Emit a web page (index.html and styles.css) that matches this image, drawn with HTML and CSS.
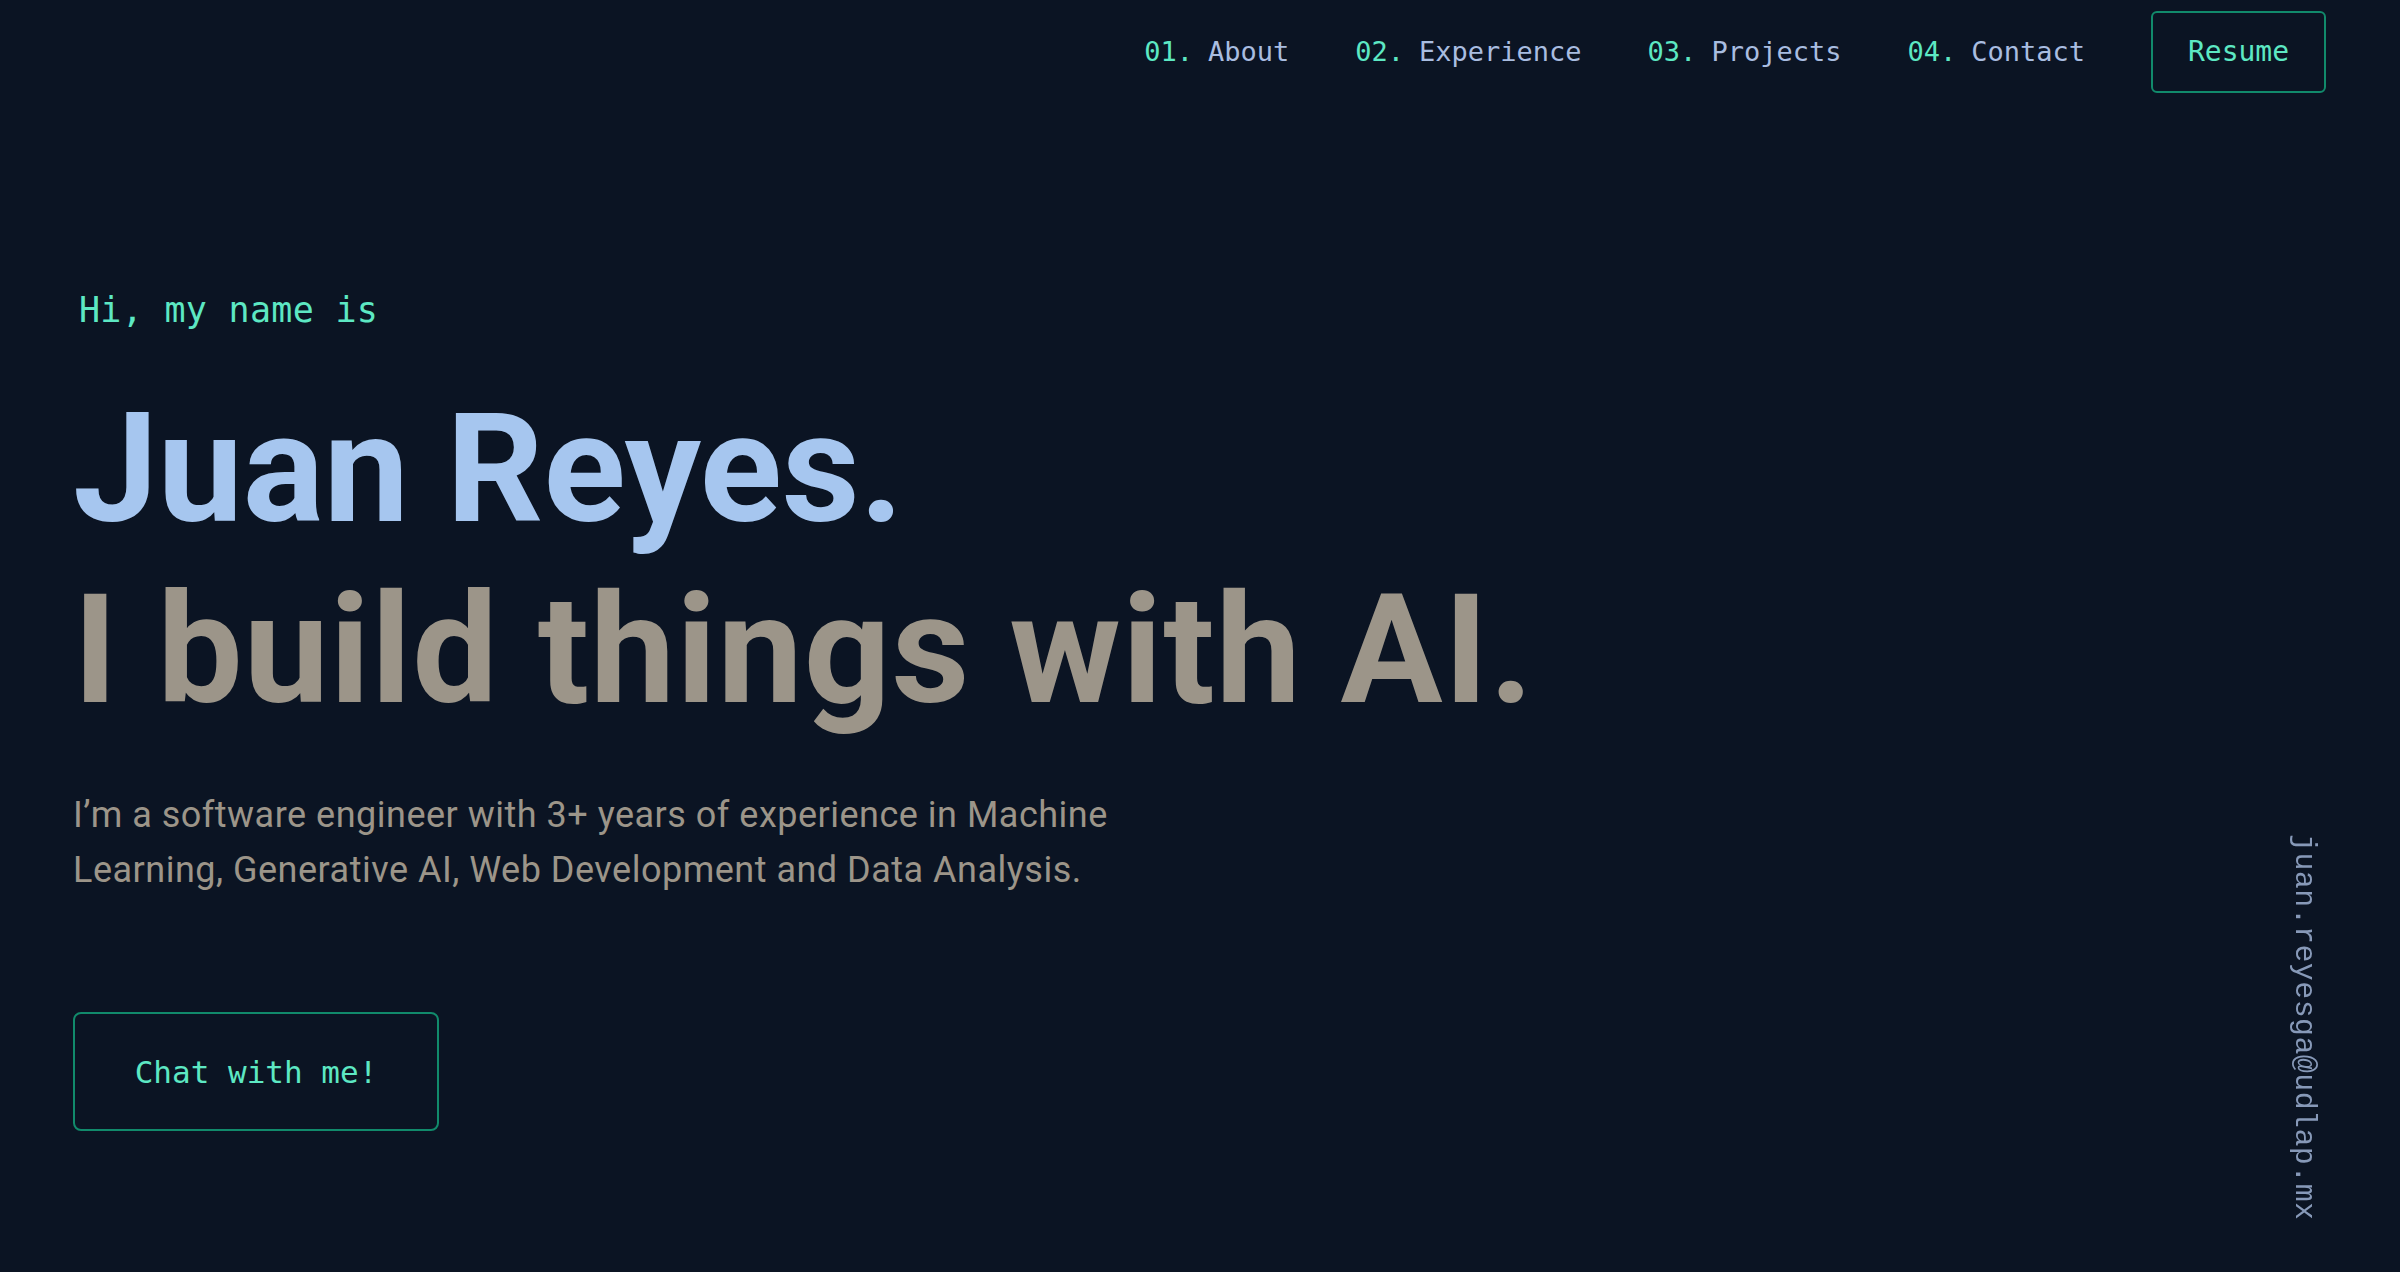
FILE: index.html
```html
<!DOCTYPE html>
<html lang="en">
<head>
<meta charset="utf-8">
<title>Juan Reyes</title>
<link rel="stylesheet" href="styles.css">
</head>
<body>
<header class="nav">
  <ol class="nav-links">
    <li><a href="#about"><span class="num">01.</span>About</a></li>
    <li><a href="#experience"><span class="num">02.</span>Experience</a></li>
    <li><a href="#projects"><span class="num">03.</span>Projects</a></li>
    <li><a href="#contact"><span class="num">04.</span>Contact</a></li>
  </ol>
  <a class="resume" href="#resume">Resume</a>
</header>
<main class="hero">
  <p class="intro">Hi, my name is</p>
  <h1 class="name">Juan Reyes.</h1>
  <h2 class="tagline">I build things with AI.</h2>
  <p class="desc">I’m a software engineer with 3+ years of experience in Machine Learning, Generative AI, Web Development and Data Analysis.</p>
  <a class="chat" href="#chat">Chat with me!</a>
</main>
<div class="email"><a href="mailto:juan.reyesga@udlap.mx">juan.reyesga@udlap.mx</a></div>
</body>
</html>
```
FILE: styles.css
```css
html, body {
  margin: 0;
  padding: 0;
}
body {
  background: #0b1423;
  height: 1272px;
  overflow: hidden;
  font-family: "Roboto", "Liberation Sans", sans-serif;
}
a {
  text-decoration: none;
  color: inherit;
}
.nav {
  height: 103px;
  display: flex;
  justify-content: flex-end;
  align-items: center;
  padding: 0 74px;
  box-sizing: border-box;
  font-family: "DejaVu Sans Mono", monospace;
  font-size: 27px;
}
.nav-links {
  list-style: none;
  margin: 0 66px 0 0;
  padding: 0;
  display: flex;
  gap: 66px;
}
.nav-links a {
  color: #a9bde0;
}
.num {
  color: #5de8c3;
  margin-right: 15px;
}
.resume {
  display: flex;
  align-items: center;
  justify-content: center;
  width: 175px;
  height: 82px;
  box-sizing: border-box;
  border: 2px solid #118a6b;
  border-radius: 6px;
  color: #5de8c3;
  font-size: 28px;
}
.hero {
  padding: 187px 73px 0;
  display: flex;
  flex-direction: column;
  align-items: flex-start;
}
.intro {
  margin: 0 0 49px 6px;
  font-family: "DejaVu Sans Mono", monospace;
  font-size: 35px;
  letter-spacing: 0.3px;
  line-height: 40px;
  color: #5de8c3;
}
.name, .tagline {
  margin: 0;
  font-size: 152px;
  line-height: 181px;
  font-weight: 700;
}
.name {
  color: #a6c6ef;
  letter-spacing: -0.2px;
}
.tagline {
  color: #9c9589;
  letter-spacing: 1px;
}
.desc {
  margin: 47px 0 0;
  max-width: 1100px;
  font-size: 36px;
  letter-spacing: 0.5px;
  line-height: 55px;
  color: #9c9589;
}
.chat {
  margin-top: 114px;
  display: flex;
  align-items: center;
  justify-content: center;
  width: 366px;
  height: 119px;
  box-sizing: border-box;
  border: 2px solid #118a6b;
  border-radius: 8px;
  font-family: "DejaVu Sans Mono", monospace;
  font-size: 31px;
  color: #5de8c3;
}
.email {
  position: fixed;
  right: 81px;
  bottom: 52px;
  writing-mode: vertical-rl;
  font-family: "Liberation Mono", monospace;
  font-size: 30px;
  letter-spacing: 0.4px;
  line-height: 30px;
  color: #8799b8;
}
```
